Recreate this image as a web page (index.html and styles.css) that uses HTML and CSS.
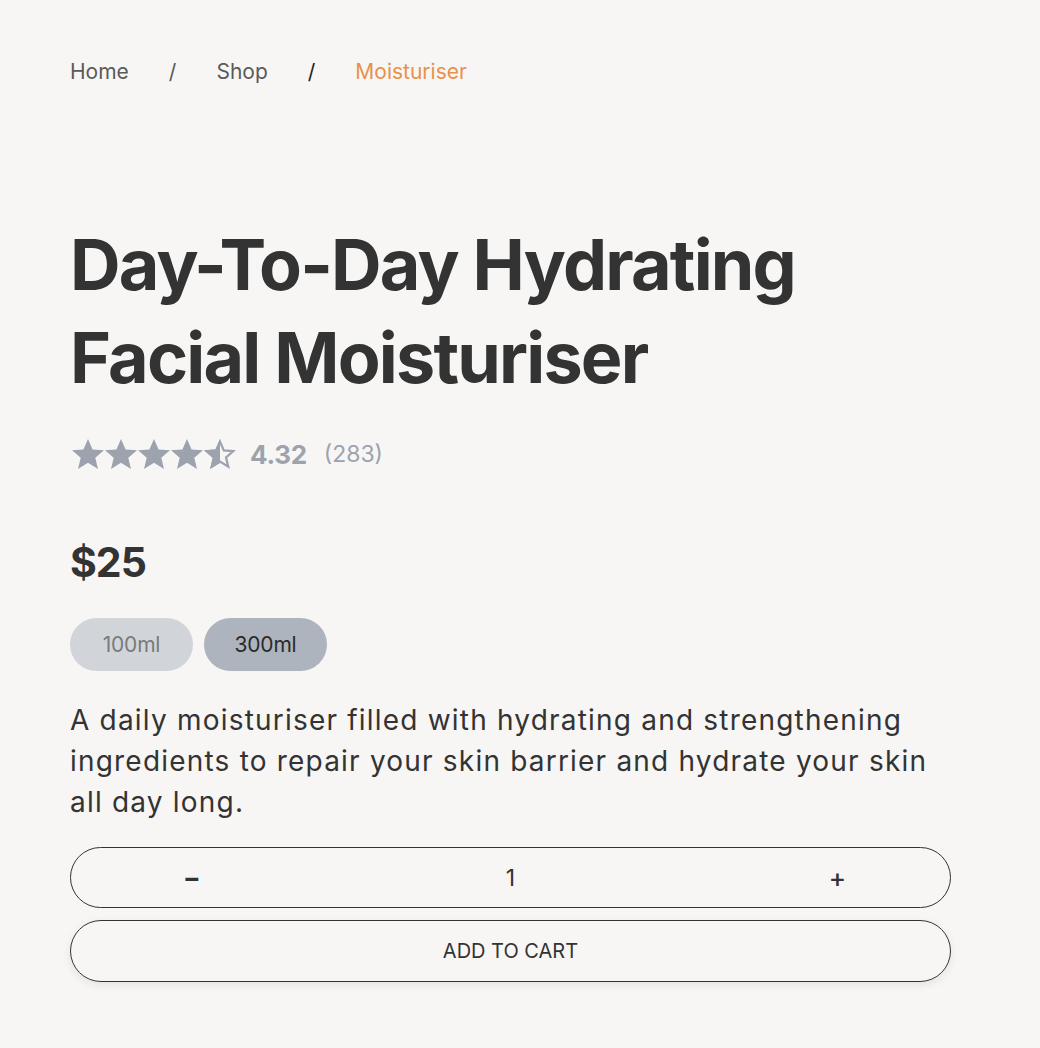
FILE: index.html
```html
<!DOCTYPE html>
<html lang="en">
<head>
	<meta charset="UTF-8">
	<title>Day-To-Day Hydrating Facial Moisturiser</title>
	<link rel="stylesheet" href="styles.css">
</head>
<body>
<div class="product">
	<ul class="crumbs">
		<li><a href="#">Home</a></li>
		<li class="sep">/</li>
		<li><a href="#">Shop</a></li>
		<li class="sep dark">/</li>
		<li class="current">Moisturiser</li>
	</ul>

	<h1 class="title">Day-To-Day Hydrating Facial Moisturiser</h1>

	<div class="rating">
		<div class="stars">
			<svg viewBox="1.9 1.6 20.2 20.2"><path class="full" d="M12 2.2l2.9 6.6 7.2.6-5.5 4.7 1.7 7-6.3-3.8-6.3 3.8 1.7-7L1.9 9.4l7.2-.6z"/></svg>
			<svg viewBox="1.9 1.6 20.2 20.2"><path class="full" d="M12 2.2l2.9 6.6 7.2.6-5.5 4.7 1.7 7-6.3-3.8-6.3 3.8 1.7-7L1.9 9.4l7.2-.6z"/></svg>
			<svg viewBox="1.9 1.6 20.2 20.2"><path class="full" d="M12 2.2l2.9 6.6 7.2.6-5.5 4.7 1.7 7-6.3-3.8-6.3 3.8 1.7-7L1.9 9.4l7.2-.6z"/></svg>
			<svg viewBox="1.9 1.6 20.2 20.2"><path class="full" d="M12 2.2l2.9 6.6 7.2.6-5.5 4.7 1.7 7-6.3-3.8-6.3 3.8 1.7-7L1.9 9.4l7.2-.6z"/></svg>
			<svg viewBox="1.9 1.6 20.2 20.2">
				<path class="empty" d="M12 3.9l2.4 5.5 6 .5-4.6 3.9 1.4 5.9L12 16.5l-5.2 3.2 1.4-5.9-4.6-3.9 6-.5z"/>
				<path class="full" d="M12 2.2v15.2l-6.3 3.8 1.7-7L1.9 9.4l7.2-.6z"/>
			</svg>
		</div>
		<span class="score">4.32</span>
		<span class="count">(283)</span>
	</div>

	<div class="price">$25</div>

	<div class="sizes">
		<button class="size">100ml</button>
		<button class="size active">300ml</button>
	</div>

	<p class="desc">A daily moisturiser filled with hydrating and strengthening ingredients to repair your skin barrier and hydrate your skin all day long.</p>

	<div class="qty">
		<button class="qty-btn minus">&minus;</button>
		<span class="qty-num">1</span>
		<button class="qty-btn plus">+</button>
	</div>

	<button class="cart">ADD TO CART</button>
</div>
</body>
</html>
```

FILE: styles.css
```css
body,div,ul,li,h1,p,button { margin:0; padding:0; }
body { background:#f7f6f4; color:#333; font-family: Inter, "Liberation Sans", sans-serif; }
ul,li { list-style:none; }
a { color:inherit; text-decoration:none; }
button { font-family:inherit; border:none; background:none; color:inherit; cursor:pointer; }

.product{
	width: 881px;
	padding: 60px 0 40px 70px;
}

.crumbs{
	display: flex;
	gap: 40px;
	font-size: 21px;
	line-height: 24px;
	color: #5a5a5a;
}
.crumbs .dark{ color:#222; }
.crumbs .current{ color:#e8914a; }

.title{
	margin-top: 134px;
	font-size: 70px;
	line-height: 93px;
	font-weight: 700;
	letter-spacing: -1.8px;
	color: #333;
	width: 780px;
}

.rating{
	margin-top: 34px;
	display: flex;
	align-items: center;
	height: 32px;
}
.stars{
	display: flex;
	gap: 1px;
	margin-left: 2px;
}
.stars svg{
	width: 32px;
	height: 32px;
}
.stars .full{ fill:#9ca3ae; }
.stars .empty{ fill:none; stroke:#9ca3ae; stroke-width:1.4; }
.score{
	margin-left: 14px;
	font-size: 26px;
	font-weight: 700;
	color: #9ca3ae;
	letter-spacing: -0.3px;
}
.count{
	margin-left: 17px;
	font-size: 23px;
	color: #9ca3ae;
}

.price{
	margin-top: 68px;
	font-size: 41px;
	line-height: 48px;
	font-weight: 700;
	letter-spacing: -1px;
}

.sizes{
	margin-top: 32px;
	display: flex;
	gap: 11px;
}
.size{
	width: 123px;
	height: 53px;
	border-radius: 27px;
	background: #d1d5da;
	color: #7a7a7a;
	font-size: 21px;
	letter-spacing: -0.2px;
}
.size.active{
	background: #adb4be;
	color: #2a2a2a;
}

.desc{
	margin-top: 29px;
	font-size: 28px;
	line-height: 41px;
	letter-spacing: 1.2px;
	color: #333;
}

.qty{
	margin-top: 24px;
	display: grid;
	grid-template-columns: 1fr auto 1fr;
	align-items: center;
	height: 59px;
	border: 1.5px solid #333;
	border-radius: 31px;
}
.qty-btn{
	font-size: 26px;
	font-weight: 700;
}
.minus{ justify-self: start; margin-left: 112px; }
.plus{ justify-self: end; margin-right: 104px; font-weight: 500; }
.qty-num{
	font-size: 23px;
}

.cart{
	display: block;
	margin-top: 12px;
	width: 100%;
	height: 62px;
	border: 1.5px solid #333;
	border-radius: 31px;
	font-size: 20px;
	box-shadow: 0 3px 10px rgba(0,0,0,0.08);
}
```
